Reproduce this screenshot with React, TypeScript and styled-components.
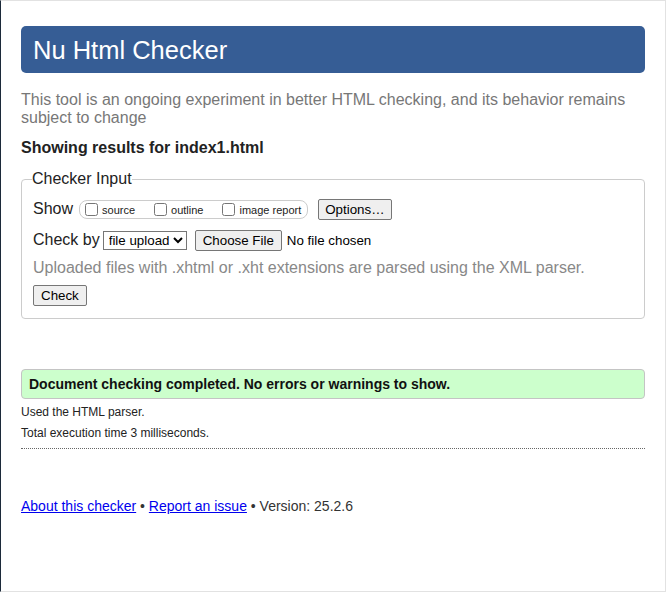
import React from 'react';
import styled, { createGlobalStyle } from 'styled-components';

const Global = createGlobalStyle`
  html, body { margin: 0; padding: 0; background: #fff; }
  body { font-family: "Liberation Sans", Arial, sans-serif; color: #222; }
  * { box-sizing: border-box; }
`;

const Frame = styled.div`
  width: 666px;
  height: 592px;
  border-left: 1px solid #1c2a3a;
  border-top: 1px solid #e2e2e2;
  border-right: 1px solid #e2e2e2;
  border-bottom: 1px solid #e2e2e2;
  padding: 25px 20px 0;
  overflow: hidden;
`;

const Header = styled.header`
  height: 47px;
  background: #365d95;
  border-radius: 5px;
  display: flex;
  align-items: center;
  padding: 0 12px;
`;

const Title = styled.h1`
  margin: 0;
  font-size: 25.5px;
  font-weight: normal;
  color: #fff;
  line-height: 30px;
`;

const Intro = styled.p`
  margin: 18px 0 0;
  font-size: 16px;
  line-height: 18px;
  color: #777;
`;

const Showing = styled.h2`
  margin: 12px 0 0;
  font-size: 16px;
  line-height: 18px;
  font-weight: bold;
  color: #222;
`;

const Fieldset = styled.fieldset`
  margin: 13px 0 0;
  padding: 0 11px 12px;
  border: 1px solid #ccc;
  border-radius: 4px;
  min-width: 0;
`;

const Legend = styled.legend`
  font-size: 16px;
  line-height: 18px;
  padding: 0;
  margin-left: -1px;
  color: #222;
`;

const Row = styled.div<{ $top: number }>`
  display: flex;
  align-items: center;
  height: 22px;
  margin-top: ${(p) => p.$top}px;
  font-size: 16px;
`;

const RowLabel = styled.span<{ $gap: number }>`
  font-size: 16px;
  margin-right: ${(p) => p.$gap}px;
`;

const CheckGroup = styled.span`
  display: inline-flex;
  align-items: center;
  gap: 19px;
  height: 19px;
  border: 1px solid #ccc;
  border-radius: 8px;
  padding: 0 6px 0 5px;
`;

const CheckLabel = styled.label`
  display: inline-flex;
  align-items: center;
  font-size: 11px;
  color: #222;
`;

const CheckText = styled.span`
  padding-top: 2px;
`;

const Box = styled.input`
  width: 13px;
  height: 13px;
  margin: 0 4px 0 0;
`;

const Button = styled.button<{ $left?: number; $pad?: number }>`
  font-family: "Liberation Sans", Arial, sans-serif;
  font-size: 13.333px;
  line-height: 15px;
  height: 21px;
  padding: 1px ${(p) => p.$pad ?? 7}px;
  margin-left: ${(p) => p.$left ?? 0}px;
  color: #000;
  background: #efefef;
  border: 1px solid #767676;
  border-radius: 2px;
`;

const Select = styled.select`
  font-family: "Liberation Sans", Arial, sans-serif;
  font-size: 13.333px;
  width: 84px;
  height: 19px;
  margin-left: 3px;
  padding: 0 0 0 1px;
  color: #000;
  background: #fff;
  border: 1px solid #767676;
  border-radius: 0;
`;

const FileName = styled.span`
  font-size: 13.333px;
  margin-left: 5px;
  color: #000;
`;

const Help = styled.p`
  margin: 8px 0 0;
  font-size: 16px;
  line-height: 18px;
  color: #888;
`;

const SubmitWrap = styled.div`
  margin-top: 8px;
  display: flex;
`;

const Success = styled.div`
  margin-top: 50px;
  background: #ccffcc;
  border: 1px solid #c4c4c4;
  border-radius: 4px;
  padding: 6px 7px;
  font-size: 14px;
  line-height: 16px;
  font-weight: bold;
  color: #111;
`;

const Detail = styled.p<{ $top: number }>`
  margin: ${(p) => p.$top}px 0 0;
  font-size: 12px;
  line-height: 14px;
  color: #222;
`;

const Rule = styled.hr`
  margin: 8px 0 0;
  border: 0;
  border-top: 1px dotted #666;
  height: 0;
`;

const Footer = styled.p`
  margin: 49px 0 0;
  font-size: 14px;
  line-height: 16px;
  color: #333;
`;

const Link = styled.a`
  color: #0000ee;
  text-decoration: underline;
`;

export default function App() {
  return (
    <>
      <Global />
      <Frame>
        <Header>
          <Title>Nu Html Checker</Title>
        </Header>
        <Intro>
          This tool is an ongoing experiment in better HTML checking, and its behavior remains
          subject to change
        </Intro>
        <Showing>Showing results for index1.html</Showing>
        <Fieldset>
          <Legend>Checker Input</Legend>
          <Row $top={10}>
            <RowLabel $gap={6}>Show</RowLabel>
            <CheckGroup>
              <CheckLabel>
                <Box type="checkbox" />
                <CheckText>source</CheckText>
              </CheckLabel>
              <CheckLabel>
                <Box type="checkbox" />
                <CheckText>outline</CheckText>
              </CheckLabel>
              <CheckLabel>
                <Box type="checkbox" />
                <CheckText>image report</CheckText>
              </CheckLabel>
            </CheckGroup>
            <Button $left={10} $pad={6}>Options…</Button>
          </Row>
          <Row $top={9}>
            <RowLabel $gap={0}>Check by</RowLabel>
            <Select defaultValue="file">
              <option value="address">address</option>
              <option value="file">file upload</option>
              <option value="text">text input</option>
            </Select>
            <Button $left={8}>Choose File</Button>
            <FileName>No file chosen</FileName>
          </Row>
          <Help>Uploaded files with .xhtml or .xht extensions are parsed using the XML parser.</Help>
          <SubmitWrap>
            <Button>Check</Button>
          </SubmitWrap>
        </Fieldset>
        <Success>Document checking completed. No errors or warnings to show.</Success>
        <Detail $top={6}>Used the HTML parser.</Detail>
        <Detail $top={7}>Total execution time 3 milliseconds.</Detail>
        <Rule />
        <Footer>
          <Link href="#">About this checker</Link> • <Link href="#">Report an issue</Link> • Version: 25.2.6
        </Footer>
      </Frame>
    </>
  );
}
